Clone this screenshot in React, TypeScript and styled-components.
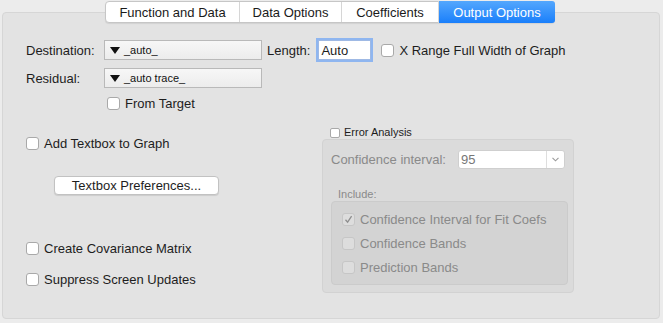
import styled, { createGlobalStyle } from 'styled-components'

const Global = createGlobalStyle`
  html, body { margin: 0; padding: 0; background: #ececec; }
  body { font-family: "Liberation Sans", Arial, sans-serif; font-size: 13px; color: #1d1d1d; }
`

const Window = styled.div`
  width: 663px; height: 323px; box-sizing: border-box;
  padding: 1px 3px 0 2px; display: flex; flex-direction: column;
`
const TabBar = styled.div`
  display: flex; align-self: center; position: relative; z-index: 1;
  margin-left: -2px; height: 20px;
  border: 1px solid #c6c6c6; border-radius: 4px; background: #fff;
  box-shadow: 0 1px 1px rgba(0,0,0,0.08);
`
const Tab = styled.div<{ $sel?: boolean; $w: number }>`
  width: ${p => p.$w}px; display: flex; align-items: center; justify-content: center;
  font-size: 13px; color: ${p => (p.$sel ? '#fff' : '#1a1a1a')};
  background: ${p => (p.$sel ? 'linear-gradient(#54a7fd, #1a7ffb)' : 'transparent')};
  border-left: 1px solid #d6d6d6;
  &:first-child { border-left: none; border-radius: 3px 0 0 3px; }
  &:last-child { border-radius: 0 3px 3px 0; margin: -1px -1px -1px 0; height: 22px; }
`
const Panel = styled.div`
  flex: 1; margin-top: -11px; margin-bottom: 4px;
  background: #e3e3e3; border: 1px solid #d6d6d6; border-radius: 4px;
  padding: 25px 0 0 23px; display: flex; flex-direction: column;
`
const Row = styled.div`
  display: flex; align-items: center; height: 24px;
`
const Label = styled.div<{ $w?: number }>`
  width: ${p => (p.$w ? `${p.$w}px` : 'auto')}; white-space: nowrap;
`
const Popup = styled.div`
  width: 158px; height: 20px; box-sizing: border-box; border: 1px solid #b9b9b9;
  background: linear-gradient(#f7f7f7, #ececec);
  display: flex; align-items: center; padding-left: 5px; gap: 4px;
  font-size: 11px; color: #111;
`
const Tri = styled.span`
  width: 0; height: 0; border-left: 5px solid transparent; border-right: 5px solid transparent;
  border-top: 7px solid #111;
`
const Field = styled.div`
  width: 53px; height: 20px; box-sizing: border-box; margin-left: 8px;
  background: #fff; border: 1px solid #9fb9e4; padding-left: 2px;
  box-shadow: 0 0 0 2px #8fb6f0; display: flex; align-items: center; font-size: 13px;
`
const Box = styled.span<{ $dim?: boolean; $small?: boolean }>`
  width: ${p => (p.$small ? 10 : 13)}px; height: ${p => (p.$small ? 10 : 13)}px;
  flex: none; box-sizing: border-box; border-radius: ${p => (p.$small ? 2 : 3)}px;
  border: 1px solid ${p => (p.$dim ? '#c6c6c6' : '#a9a9a9')};
  background: ${p => (p.$dim ? '#dddddd' : '#fff')};
  display: flex; align-items: center; justify-content: center;
`
const Check = styled.label<{ $dim?: boolean; $small?: boolean }>`
  display: flex; align-items: center; gap: ${p => (p.$small ? 4 : 5)}px;
  font-size: ${p => (p.$small ? 11 : 13)}px; line-height: ${p => (p.$small ? 13 : 15)}px;
  color: ${p => (p.$dim ? '#8a8a8a' : '#1d1d1d')}; white-space: nowrap;
`
const Body = styled.div`
  display: flex; flex: 1;
`
const LeftCol = styled.div`
  width: 296px; display: flex; flex-direction: column;
`
const Button = styled.div`
  width: 163px; height: 17px; margin: 21px 0 0 28px;
  background: #fff; border: 1px solid #c2c2c2; border-radius: 4px;
  box-shadow: 0 1px 1px rgba(0,0,0,0.1);
  display: flex; align-items: center; justify-content: center; font-size: 13px;
`
const RightCol = styled.div`
  display: flex; flex-direction: column; padding-top: 11px;
`
const Group = styled.div`
  width: 252px; height: 154px; margin-top: 0;
  background: #dbdbdb; border: 1px solid #d2d2d2; border-radius: 4px;
  padding: 10px 0 0 8px; box-sizing: border-box; display: flex; flex-direction: column;
  color: #8a8a8a;
`
const Combo = styled.div`
  width: 105px; height: 17px; margin-left: 12px; display: flex;
  background: #fff; border: 1px solid #cfcfcf; border-radius: 3px; overflow: hidden;
`
const ComboText = styled.div`
  flex: 1; padding-left: 2px; display: flex; align-items: center; font-size: 13px; color: #777;
`
const ComboArrow = styled.div`
  width: 17px; border-left: 1px solid #dedede; display: flex; align-items: center; justify-content: center;
`
const SubLabel = styled.div`
  font-size: 11px; line-height: 13px; margin: 19px 0 0 7px;
`
const Inner = styled.div`
  width: 237px; height: 84px; margin-top: 0; box-sizing: border-box;
  background: #d3d3d3; border: 1px solid #cbcbcb; border-radius: 4px;
  padding: 10px 0 0 10px; display: flex; flex-direction: column; gap: 9px;
`

export default function App() {
  const tabs = [
    { t: 'Function and Data', w: 133 },
    { t: 'Data Options', w: 101 },
    { t: 'Coefficients', w: 96 },
    { t: 'Output Options', w: 116 },
  ]
  return (
    <Window>
      <Global />
      <TabBar>
        {tabs.map((x, i) => (
          <Tab key={x.t} $w={x.w} $sel={i === 3}>{x.t}</Tab>
        ))}
      </TabBar>
      <Panel>
        <Row>
          <Label $w={78}>Destination:</Label>
          <Popup><Tri />_auto_</Popup>
          <Label style={{ marginLeft: 5 }}>Length:</Label>
          <Field>Auto</Field>
          <Check style={{ marginLeft: 10 }}><Box />X Range Full Width of Graph</Check>
        </Row>
        <Row style={{ marginTop: 4 }}>
          <Label $w={78}>Residual:</Label>
          <Popup><Tri />_auto trace_</Popup>
        </Row>
        <Row style={{ paddingLeft: 81, marginTop: 1 }}>
          <Check><Box />From Target</Check>
        </Row>
        <Body>
          <LeftCol>
            <Row style={{ marginTop: 16 }}>
              <Check><Box />Add Textbox to Graph</Check>
            </Row>
            <Button>Textbox Preferences...</Button>
            <Row style={{ marginTop: 41 }}>
              <Check><Box />Create Covariance Matrix</Check>
            </Row>
            <Row style={{ marginTop: 7 }}>
              <Check><Box />Suppress Screen Updates</Check>
            </Row>
          </LeftCol>
          <RightCol>
            <Check $small style={{ marginLeft: 8 }}><Box $small />Error Analysis</Check>
            <Group>
              <Row style={{ height: 19 }}>
                <Label>Confidence interval:</Label>
                <Combo>
                  <ComboText>95</ComboText>
                  <ComboArrow>
                    <svg width="7" height="5" viewBox="0 0 7 5">
                      <path d="M0.5 0.8 L3.5 3.8 L6.5 0.8" fill="none" stroke="#9a9a9a" strokeWidth="1.1" />
                    </svg>
                  </ComboArrow>
                </Combo>
              </Row>
              <SubLabel>Include:</SubLabel>
              <Inner>
                <Check $dim>
                  <Box $dim>
                    <svg width="9" height="9" viewBox="0 0 9 9">
                      <path d="M1.5 4.8 L3.6 7.2 L7.6 1.2" fill="none" stroke="#8e8e8e" strokeWidth="1.3" />
                    </svg>
                  </Box>
                  Confidence Interval for Fit Coefs
                </Check>
                <Check $dim><Box $dim />Confidence Bands</Check>
                <Check $dim><Box $dim />Prediction Bands</Check>
              </Inner>
            </Group>
          </RightCol>
        </Body>
      </Panel>
    </Window>
  )
}
